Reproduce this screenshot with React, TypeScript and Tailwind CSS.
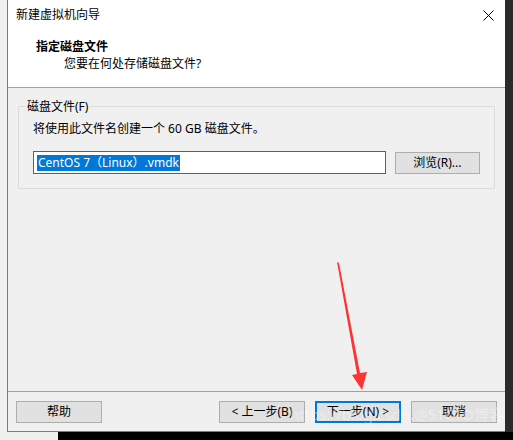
import React from 'react'

const font = { fontFamily: '"Noto Sans", "Noto Sans CJK SC", sans-serif' }

const Btn = ({ label, primary, className = '' }: { label: string; primary?: boolean; className?: string }) => (
  <div
    className={`flex h-[22px] w-[86px] items-center justify-center bg-[#e1e1e1] text-[12px] text-black ${
      primary ? 'border-2 border-[#0078d7]' : 'border border-[#adadad]'
    } ${className}`}>
    {label}
  </div>
)

export default function App() {
  return (
    <div className="relative flex h-[440px] w-[513px] flex-col overflow-hidden bg-[#2b2b2b]" style={font}>
      <div className="flex h-[432px]">
        <div className="w-[7px] bg-[#f0f0f0]" />
        {/* window */}
        <div className="flex w-[498px] flex-col border-b border-l border-[#7a7a7a] bg-[#f0f0f0]">
          {/* title + header */}
          <div className="flex h-[88px] flex-col border-b border-[#a0a0a0] bg-white">
            <div className="flex h-[30px] items-center justify-between pl-[8px] pr-[10px]">
              <span className="text-[12px] text-black">新建虚拟机向导</span>
              <svg width="11" height="11" viewBox="0 0 11 11" className="mr-[1px]">
                <path d="M0.5 0.5L10.5 10.5M10.5 0.5L0.5 10.5" stroke="#000" strokeWidth="1" />
              </svg>
            </div>
            <div className="pl-[28px] pt-[9px] text-[12px] font-bold leading-[16px] text-black">指定磁盘文件</div>
            <div className="pl-[56px] pt-[1px] text-[12px] leading-[16px] text-black">您要在何处存储磁盘文件?</div>
          </div>

          {/* body */}
          <div className="flex flex-1 flex-col px-[10px] pt-[12px]">
            <div className="relative mt-[6px] h-[83px] border border-[#dcdcdc] px-[14px] pt-[14px]">
              <span className="absolute -top-[8px] left-[6px] bg-[#f0f0f0] px-[2px] text-[12px] leading-[16px] text-black">
                磁盘文件(F)
              </span>
              <div className="text-[12px] leading-[16px] text-black">将使用此文件名创建一个 60 GB 磁盘文件。</div>
              <div className="mt-[14px] flex items-center gap-[9px]">
                <div className="flex h-[23px] w-[355px] items-center border border-[#0078d7] bg-white pl-[3px]">
                  <span className="bg-[#0078d7] px-[1px] text-[12px] leading-[16px] text-white">
                    CentOS 7（Linux）.vmdk
                  </span>
                </div>
                <Btn label="浏览(R)..." className="w-[85px]" />
              </div>
            </div>
          </div>

          {/* footer */}
          <div className="flex h-[40px] items-start border-t border-[#a0a0a0] px-[8px] pt-[9px]">
            <Btn label="帮助" />
            <div className="flex-1" />
            <Btn label="< 上一步(B)" />
            <Btn label="下一步(N) >" primary className="ml-[10px]" />
            <Btn label="取消" className="ml-[10px]" />
          </div>
        </div>
        <div className="flex-1 bg-[#2b2b2b]" />
      </div>
      <div className="flex flex-1">
        <div className="w-[58px] bg-[#f0f0f0]" />
        <div className="flex-1 bg-black" />
      </div>

      {/* red annotation arrow */}
      <svg className="pointer-events-none absolute left-0 top-0" width="513" height="440" viewBox="0 0 513 440">
        <polygon points="337,262 339,263 360,373 367,372 362,390 352,375 357,374" fill="#ff3333" />
      </svg>
      {/* watermark */}
      <div className="pointer-events-none absolute left-[290px] top-[403px] whitespace-nowrap text-[15px] text-white/40">
        https://blog.csdn.@51CTO博客
      </div>
    </div>
  )
}
